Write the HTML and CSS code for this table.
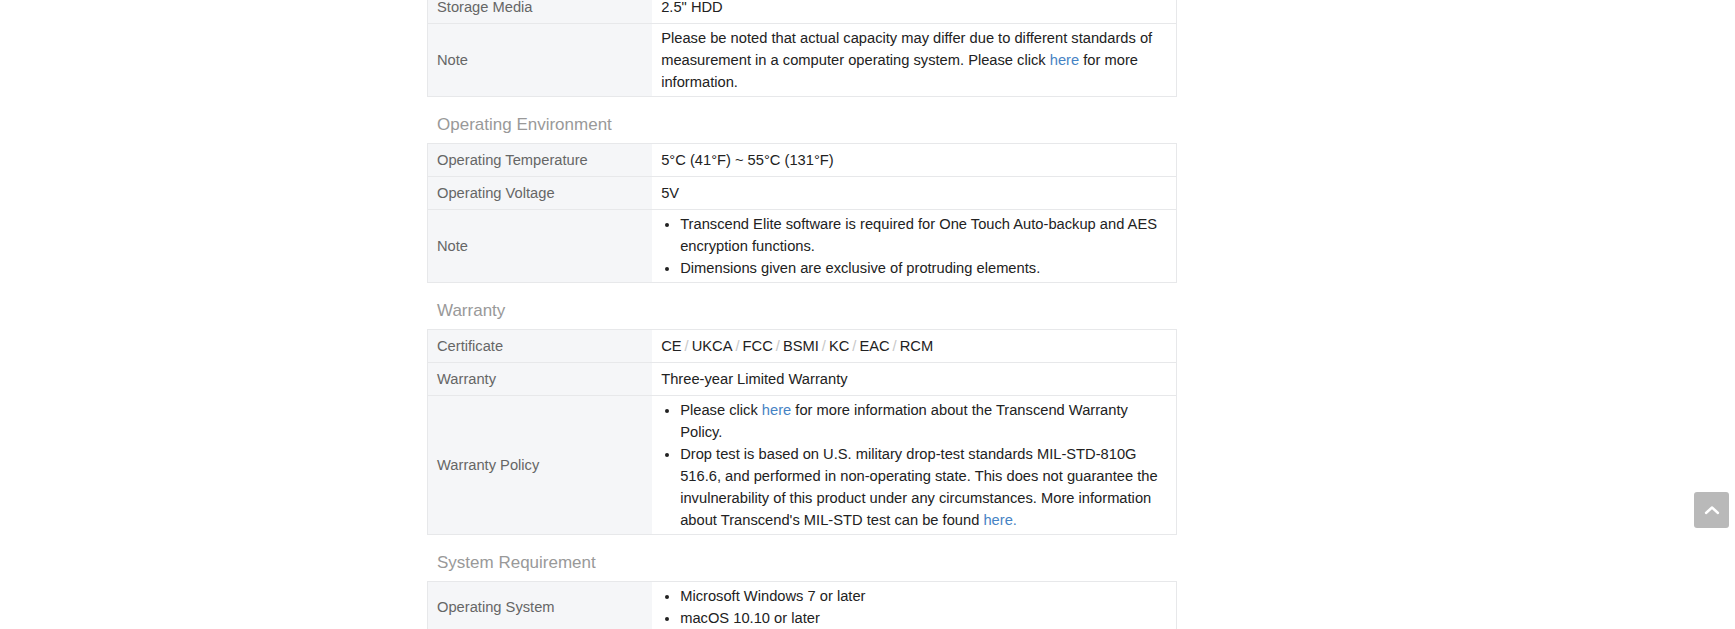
FILE: index.html
```html
<!DOCTYPE html>
<html lang="en">
<head>
<meta charset="utf-8">
<title>Specifications</title>
<link rel="stylesheet" href="styles.css">
</head>
<body>
<div class="page">
  <main class="specs">
    <table class="spec-table">
      <tr><th>Storage Media</th><td>2.5" HDD</td></tr>
      <tr><th>Note</th><td>Please be noted that actual capacity may differ due to different standards of measurement in a computer operating system. Please click <a href="#">here</a> for more information.</td></tr>
    </table>

    <h3 class="spec-title">Operating Environment</h3>
    <table class="spec-table">
      <tr><th>Operating Temperature</th><td>5°C (41°F) ~ 55°C (131°F)</td></tr>
      <tr><th>Operating Voltage</th><td>5V</td></tr>
      <tr><th>Note</th><td>
        <ul class="bullets">
          <li>Transcend Elite software is required for One Touch Auto-backup and AES encryption functions.</li>
          <li>Dimensions given are exclusive of protruding elements.</li>
        </ul>
      </td></tr>
    </table>

    <h3 class="spec-title">Warranty</h3>
    <table class="spec-table">
      <tr><th>Certificate</th><td>CE<span class="sep">/</span>UKCA<span class="sep">/</span>FCC<span class="sep">/</span>BSMI<span class="sep">/</span>KC<span class="sep">/</span>EAC<span class="sep">/</span>RCM</td></tr>
      <tr><th>Warranty</th><td>Three-year Limited Warranty</td></tr>
      <tr><th>Warranty Policy</th><td>
        <ul class="bullets">
          <li>Please click <a href="#">here</a> for more information about the Transcend Warranty Policy.</li>
          <li>Drop test is based on U.S. military drop-test standards MIL-STD-810G 516.6, and performed in non-operating state. This does not guarantee the invulnerability of this product under any circumstances. More information about Transcend's MIL-STD test can be found <a href="#">here.</a></li>
        </ul>
      </td></tr>
    </table>

    <h3 class="spec-title">System Requirement</h3>
    <table class="spec-table">
      <tr><th>Operating System</th><td>
        <ul class="bullets">
          <li>Microsoft Windows 7 or later</li>
          <li>macOS 10.10 or later</li>
        </ul>
      </td></tr>
    </table>
  </main>
</div>
<a class="back-top" href="#" aria-label="Back to top">
  <svg width="16" height="10" viewBox="0 0 16 10"><path d="M2 8 L8 2.5 L14 8" fill="none" stroke="#fff" stroke-width="2.4" stroke-linecap="round" stroke-linejoin="round"/></svg>
</a>
</body>
</html>
```

FILE: styles.css
```css
html, body {
  margin: 0;
  padding: 0;
  background: #fff;
}

body {
  font-family: "Liberation Sans", Arial, sans-serif;
  font-size: 14.7px;
  line-height: 22px;
  color: #222;
  overflow: hidden;
}

.page {
  display: flex;
  padding-left: 427px;
  margin-top: -10px;
}

.specs {
  width: 750px;
}

.spec-table {
  width: 100%;
  border-collapse: collapse;
  border: 1px solid #e7e8ea;
}

.spec-table th,
.spec-table td {
  border-top: 1px solid #e7e8ea;
  vertical-align: middle;
  text-align: left;
}

.spec-table th {
  width: 30%;
  box-sizing: border-box;
  padding: 5px 9px;
  background: #f5f6f8;
  color: #666;
  font-weight: normal;
}

.spec-table td {
  padding: 3px 9px;
  color: #222;
}

.spec-table a {
  color: #4683c4;
  text-decoration: none;
}

.sep {
  color: #c8c8c8;
  margin: 0 3px;
}

.bullets {
  margin: 0;
  padding-left: 19px;
}

.spec-title {
  margin: 16px 0 6px;
  padding-left: 10px;
  font-size: 17px;
  line-height: 24px;
  font-weight: normal;
  color: #999;
}

.back-top {
  position: fixed;
  right: 6px;
  top: 492px;
  width: 35px;
  height: 36px;
  border-radius: 3px;
  background: #b9b9b9;
  display: flex;
  align-items: center;
  justify-content: center;
}
```
